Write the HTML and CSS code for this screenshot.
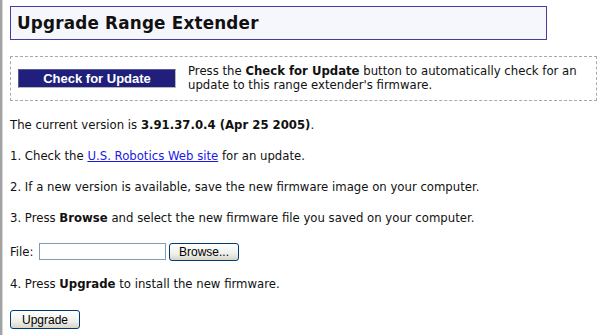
FILE: index.html
```html
<!DOCTYPE html>
<html>
<head>
<meta charset="utf-8">
<link rel="stylesheet" href="styles.css">
</head>
<body>
<div class="page">
  <div class="title-box"><h1 class="title">Upgrade Range Extender</h1></div>
  <div class="check-box">
    <button class="btn-check" type="button">Check for Update</button>
    <p class="check-text">Press the <b>Check for Update</b> button to automatically check for an<br>update to this range extender's firmware.</p>
  </div>
  <p class="line version">The current version is <b>3.91.37.0.4 (Apr 25 2005)</b>.</p>
  <p class="line">1. Check the <a class="link" href="#">U.S. Robotics Web site</a> for an update.</p>
  <p class="line">2. If a new version is available, save the new firmware image on your computer.</p>
  <p class="line">3. Press <b>Browse</b> and select the new firmware file you saved on your computer.</p>
  <div class="file-row">
    <span class="file-label">File:</span>
    <span class="file-input"></span>
    <button class="btn-xp btn-browse" type="button">Browse...</button>
  </div>
  <p class="line">4. Press <b>Upgrade</b> to install the new firmware.</p>
  <div class="upgrade-row">
    <button class="btn-xp btn-upgrade" type="button">Upgrade</button>
  </div>
</div>
</body>
</html>
```

FILE: styles.css
```css
html, body {
  margin: 0;
  padding: 0;
  background: #ffffff;
}
body {
  width: 600px;
  height: 335px;
  overflow: hidden;
  font-family: "DejaVu Sans", Verdana, sans-serif;
  font-size: 11.7px;
  color: #111111;
}
.page {
  box-sizing: border-box;
  height: 335px;
  border-left: 2px solid #a3a3a3;
  box-shadow: inset 1px 0 0 #d6d6d6;
  padding: 6px 4px 0 8px;
  display: flex;
  flex-direction: column;
  align-items: flex-start;
  gap: 16px;
}
.title-box {
  box-sizing: border-box;
  width: 537px;
  height: 34px;
  border: 1px solid #443da0;
  background: #f6f7fd;
  display: flex;
  align-items: center;
  padding-left: 6px;
}
.title {
  margin: 0;
  font-size: 16.8px;
  font-weight: bold;
  color: #111111;
  letter-spacing: 0.2px;
}
.check-box {
  box-sizing: border-box;
  width: 587px;
  height: 45px;
  border: 1px dashed #a8a8a8;
  display: flex;
  align-items: center;
  padding-left: 7px;
  gap: 12px;
}
.btn-check {
  box-sizing: border-box;
  width: 158px;
  height: 19px;
  margin: 0;
  padding: 0;
  background: #20207c;
  color: #ffffff;
  font-family: "Liberation Sans", Arial, sans-serif;
  font-weight: bold;
  font-size: 13px;
  border: 1px solid;
  border-color: #5a5aa0 #b8b8b8 #b8b8b8 #5a5aa0;
}
.check-text {
  margin: 0;
  line-height: 13.5px;
}
.line {
  margin: 0;
  line-height: 15px;
}
.version {
  margin-top: 1px;
}
.link {
  color: #1a1ae6;
  text-decoration: underline;
}
.file-row {
  display: flex;
  align-items: center;
  height: 19px;
}
.file-label {
  width: 29px;
}
.file-input {
  box-sizing: border-box;
  width: 127px;
  height: 17px;
  border: 1px solid #7f9db9;
  background: #ffffff;
  margin-right: 3px;
}
.btn-xp {
  box-sizing: border-box;
  margin: 0;
  padding: 0;
  width: 70px;
  font-family: "Liberation Sans", Arial, sans-serif;
  font-size: 12px;
  color: #000000;
  border: 1px solid #003c74;
  border-radius: 3px;
  background: linear-gradient(#ffffff, #f0f0ea 60%, #d8d5c8);
}
.btn-browse {
  height: 18px;
}
.btn-upgrade {
  height: 19px;
}
.upgrade-row {
  display: flex;
  margin-top: 2px;
}
```
